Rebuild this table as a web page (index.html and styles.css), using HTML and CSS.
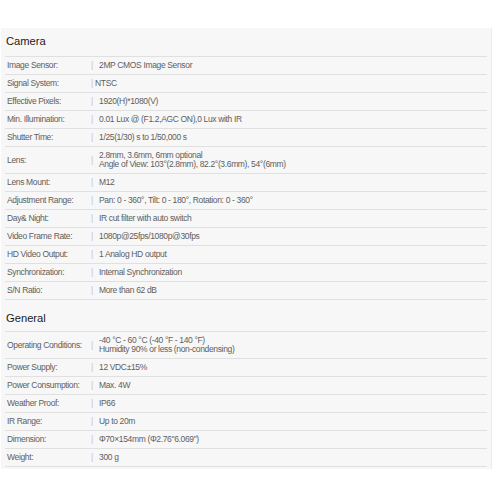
FILE: index.html
```html
<!DOCTYPE html>
<html>
<head>
<meta charset="utf-8">
<link rel="stylesheet" href="styles.css">
</head>
<body>
<div class="panel">
  <h2 class="heading heading-first">Camera</h2>
  <div class="row"><span class="label">Image Sensor:</span><span class="sep">|</span><span class="value">2MP CMOS Image Sensor</span></div>
  <div class="row"><span class="label">Signal System:</span><span class="sep">|</span><span class="value tight">NTSC</span></div>
  <div class="row"><span class="label">Effective Pixels:</span><span class="sep">|</span><span class="value">1920(H)*1080(V)</span></div>
  <div class="row"><span class="label">Min. Illumination:</span><span class="sep">|</span><span class="value">0.01 Lux @ (F1.2,AGC ON),0 Lux with IR</span></div>
  <div class="row"><span class="label">Shutter Time:</span><span class="sep">|</span><span class="value">1/25(1/30) s to 1/50,000 s</span></div>
  <div class="row row-tall"><span class="label">Lens:</span><span class="sep">|</span><span class="value">2.8mm, 3.6mm, 6mm optional<br>Angle of View: 103°(2.8mm), 82.2°(3.6mm), 54°(6mm)</span></div>
  <div class="row"><span class="label">Lens Mount:</span><span class="sep">|</span><span class="value">M12</span></div>
  <div class="row"><span class="label">Adjustment Range:</span><span class="sep">|</span><span class="value">Pan: 0 - 360°, Tilt: 0 - 180°, Rotation: 0 - 360°</span></div>
  <div class="row"><span class="label">Day&amp; Night:</span><span class="sep">|</span><span class="value">IR cut filter with auto switch</span></div>
  <div class="row"><span class="label">Video Frame Rate:</span><span class="sep">|</span><span class="value">1080p@25fps/1080p@30fps</span></div>
  <div class="row"><span class="label">HD Video Output:</span><span class="sep">|</span><span class="value">1 Analog HD output</span></div>
  <div class="row"><span class="label">Synchronization:</span><span class="sep">|</span><span class="value">Internal Synchronization</span></div>
  <div class="row"><span class="label">S/N Ratio:</span><span class="sep">|</span><span class="value">More than 62 dB</span></div>
  <h2 class="heading heading-second">General</h2>
  <div class="row row-tall"><span class="label">Operating Conditions:</span><span class="sep">|</span><span class="value">-40 °C - 60 °C (-40 °F - 140 °F)<br>Humidity 90% or less (non-condensing)</span></div>
  <div class="row"><span class="label">Power Supply:</span><span class="sep">|</span><span class="value">12 VDC±15%</span></div>
  <div class="row"><span class="label">Power Consumption:</span><span class="sep">|</span><span class="value">Max. 4W</span></div>
  <div class="row"><span class="label">Weather Proof:</span><span class="sep">|</span><span class="value">IP66</span></div>
  <div class="row"><span class="label">IR Range:</span><span class="sep">|</span><span class="value">Up to 20m</span></div>
  <div class="row"><span class="label">Dimension:</span><span class="sep">|</span><span class="value">Φ70×154mm (Φ2.76"6.069")</span></div>
  <div class="row"><span class="label">Weight:</span><span class="sep">|</span><span class="value">300 g</span></div>
</div>
</body>
</html>
```
FILE: styles.css
```css
html, body {
  margin: 0;
  padding: 0;
  background: #ffffff;
}

body {
  font-family: "Liberation Sans", Arial, sans-serif;
  color: #5e5e5e;
}

.panel {
  margin: 28px 0 0 1px;
  width: 491px;
  box-sizing: border-box;
  padding: 0 4px 2px 4px;
  background: #f7f7f7;
  border-right: 1px solid #ececec;
}

.heading {
  margin: 0;
  font-weight: normal;
  font-size: 11.2px;
  color: #1a1a1a;
  padding-left: 1px;
  border-bottom: 1px solid #e0e0e0;
  display: flex;
  align-items: center;
  box-sizing: border-box;
}

.heading-first {
  height: 29px;
  padding-bottom: 3px;
}

.heading-second {
  height: 32px;
  padding-top: 4px;
}

.row {
  display: flex;
  align-items: center;
  height: 18px;
  box-sizing: border-box;
  border-bottom: 1px solid #e0e0e0;
  font-size: 8.5px;
  letter-spacing: -0.35px;
  line-height: 9px;
}

.row-tall {
  height: 27px;
}

.label {
  width: 84px;
  padding-left: 2px;
  flex: none;
}

.sep {
  color: #c4c4c4;
  width: 8px;
  flex: none;
}

.value {
  flex: 1;
}

.value.tight {
  margin-left: -4px;
}
```
